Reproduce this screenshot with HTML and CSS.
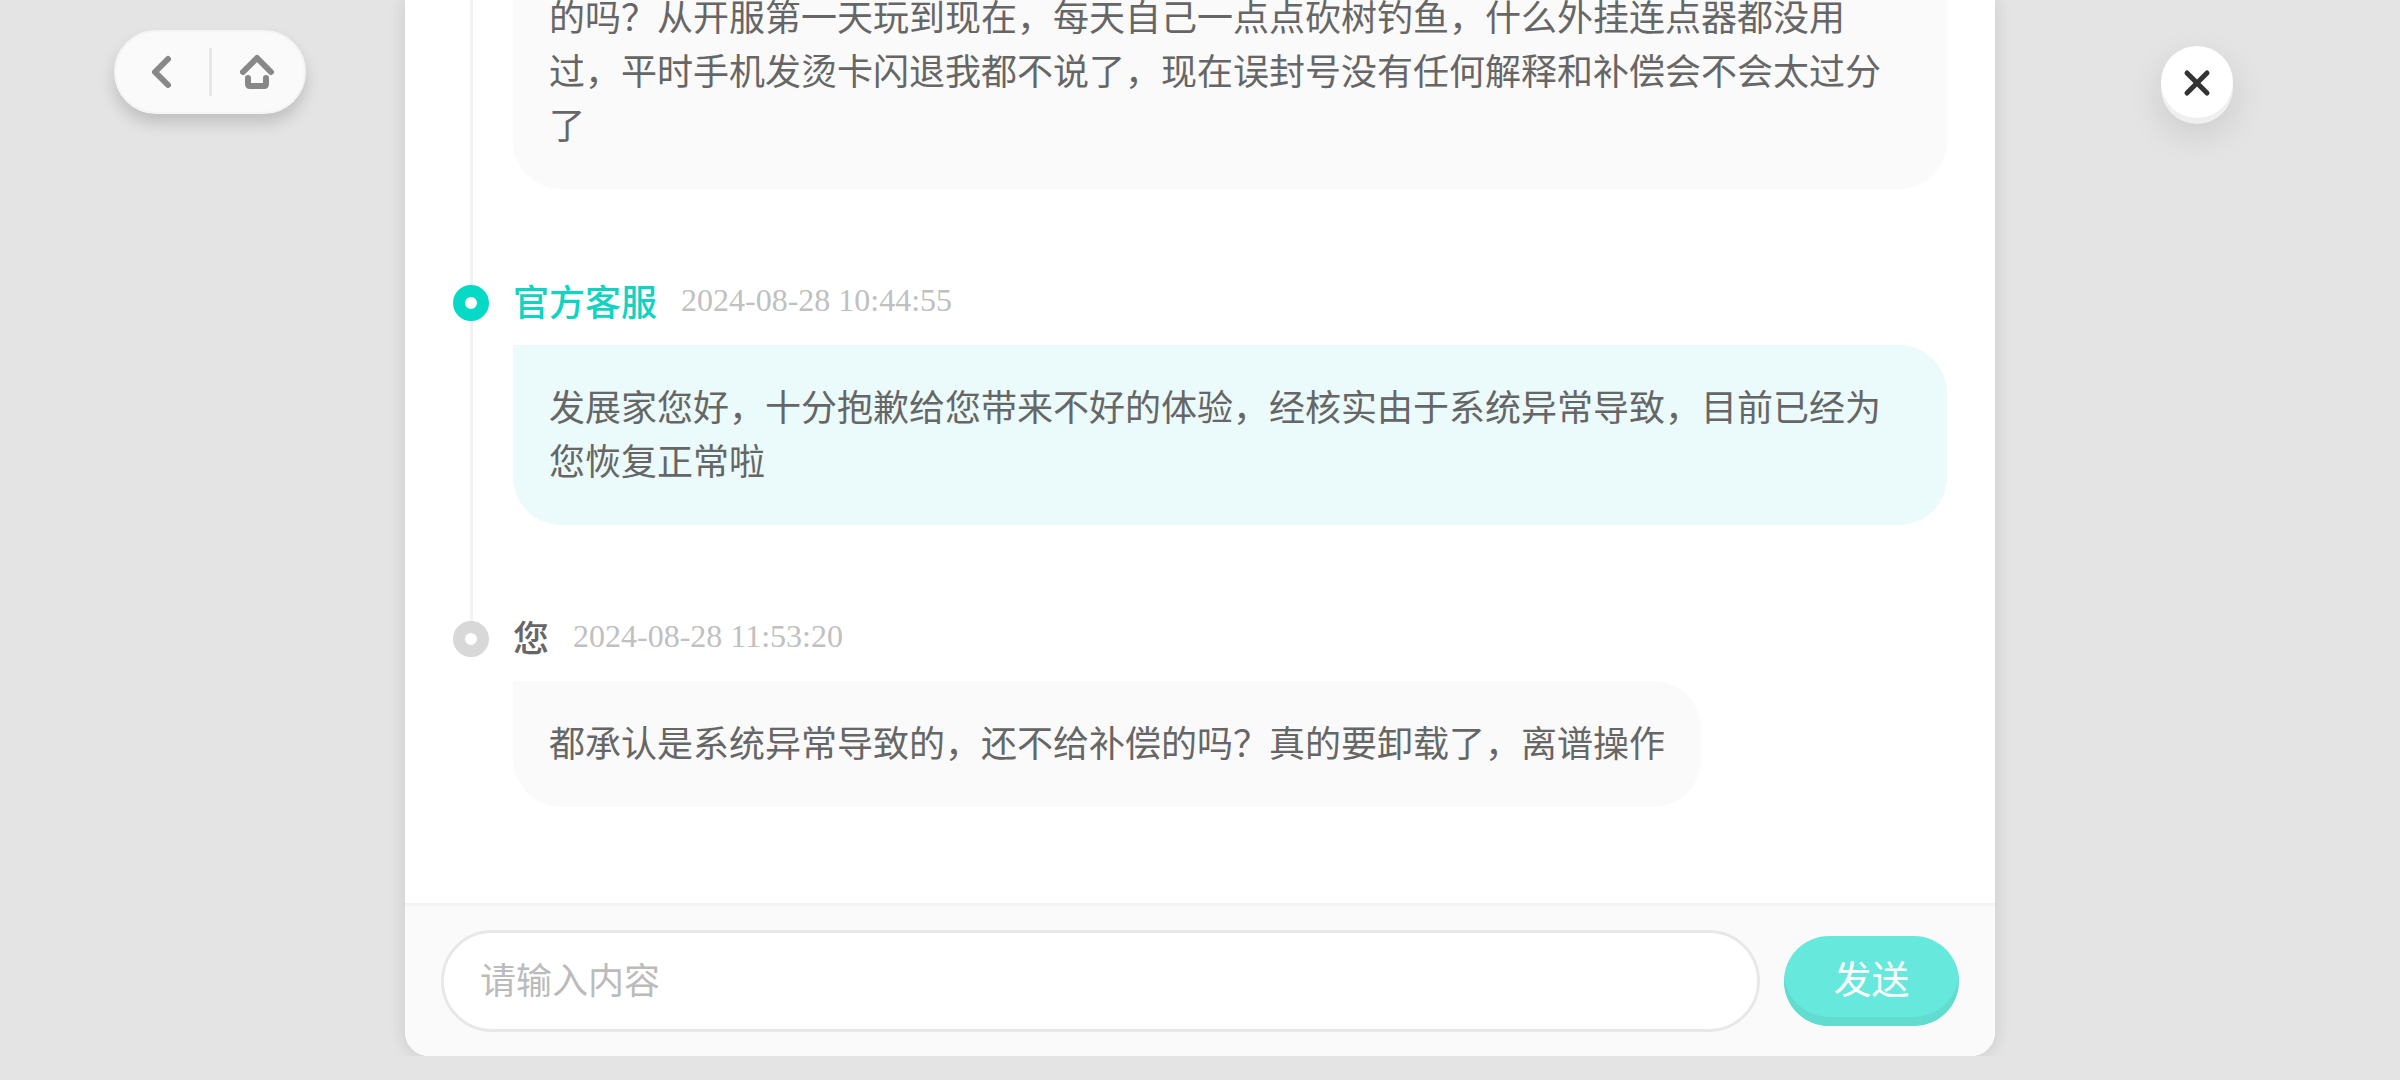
FILE: index.html
```html
<!DOCTYPE html>
<html lang="zh-CN">
<head>
  <meta charset="UTF-8">
  <meta name="viewport" content="width=device-width, initial-scale=1.0">
  <title>官方客服</title>
  <link rel="stylesheet" href="styles.css">
</head>
<body>

  <!-- Back / Home -->
  <div class="side side-left">
    <nav class="nav-pill">
      <button type="button" class="nav-btn" aria-label="返回">
        <svg width="36" height="36" viewBox="0 0 36 36"><path d="M24 5L11 18L24 31"/></svg>
      </button>
      <span class="nav-divider"></span>
      <button type="button" class="nav-btn" aria-label="首页">
        <svg width="36" height="36" viewBox="0 0 36 36"><path d="M3 18L17 4L31 18M8 24V30Q8 32 10 32H24Q26 32 26 30V24"/></svg>
      </button>
    </nav>
  </div>

  <!-- Chat Panel -->
  <main class="panel">
    <div class="messages">

      <div class="item">
        <div class="rail"><span class="line"></span></div>
        <div class="content">
          <p class="bubble">的吗？从开服第一天玩到现在，每天自己一点点砍树钓鱼，什么外挂连点器都没用过，平时手机发烫卡闪退我都不说了，现在误封号没有任何解释和补偿会不会太过分了</p>
        </div>
      </div>

      <div class="item official">
        <div class="rail"><span class="line-top"></span><span class="dot"></span><span class="line"></span></div>
        <div class="content">
          <div class="item-header">
            <span class="name">官方客服</span>
            <time class="date">2024-08-28 10:44:55</time>
          </div>
          <p class="bubble">发展家您好，十分抱歉给您带来不好的体验，经核实由于系统异常导致，目前已经为您恢复正常啦</p>
        </div>
      </div>

      <div class="item">
        <div class="rail"><span class="line-top"></span><span class="dot"></span></div>
        <div class="content">
          <div class="item-header">
            <span class="name">您</span>
            <time class="date">2024-08-28 11:53:20</time>
          </div>
          <p class="bubble">都承认是系统异常导致的，还不给补偿的吗？真的要卸载了，离谱操作</p>
        </div>
      </div>

    </div>

    <!-- Reply Form -->
    <form class="reply" onsubmit="return false">
      <input type="text" class="reply-input" placeholder="请输入内容" aria-label="请输入内容">
      <button type="submit" class="send-btn">发送</button>
    </form>
  </main>

  <!-- Close -->
  <div class="side side-right">
    <button type="button" class="close-btn" aria-label="关闭">
      <svg width="36" height="36" viewBox="0 0 36 36"><path d="M8 9L28 29M28 9L8 29"/></svg>
    </button>
  </div>

</body>
</html>
```

FILE: styles.css
```css
* {
  margin: 0;
  padding: 0;
  box-sizing: border-box;
}

body {
  display: grid;
  grid-template-columns: 1fr 66.25% 1fr;
  height: 100vh;
  padding-bottom: 24px;
  overflow: hidden;
  background-color: #e4e4e4;
  color: #666;
  font-family: "Noto Sans CJK SC", sans-serif;
  font-size: 36px;
  line-height: 54px;
}

button,
input {
  font-family: inherit;
  border: none;
}

button {
  cursor: pointer;
}

svg {
  display: block;
  fill: none;
  stroke-linecap: round;
  stroke-linejoin: round;
}

.side {
  display: flex;
  align-items: flex-start;
}

.side-left {
  padding: 30px 0 0 114px;
}

.side-right {
  justify-content: flex-end;
  padding: 46px 167px 0 0;
}

/* Back / Home */
.nav-pill {
  display: flex;
  align-items: center;
  width: 192px;
  height: 84px;
  background-color: #fafafa;
  border: 2px solid #f4f4f4;
  border-radius: 42px;
  box-shadow: 0 9px 15px rgba(0, 0, 0, 0.16);
}

.nav-btn {
  flex: 1;
  display: flex;
  justify-content: center;
  background: none;
}

.nav-btn svg {
  stroke: #888;
  stroke-width: 6;
}

.nav-divider {
  width: 3px;
  height: 48px;
  background-color: #e6e6e6;
}

/* Close */
.close-btn {
  display: flex;
  align-items: center;
  justify-content: center;
  width: 72px;
  height: 72px;
  background-color: #fff;
  border-radius: 50%;
  box-shadow: 0 6px 0 #efefef, 0 15px 36px rgba(0, 0, 0, 0.12);
}

.close-btn svg {
  stroke: #333;
  stroke-width: 5;
}

/* Chat Panel */
.panel {
  display: flex;
  flex-direction: column;
  min-height: 0;
  background-color: #fff;
  border-radius: 0 0 24px 24px;
  box-shadow: 0 0 18px rgba(0, 0, 0, 0.12);
  clip-path: inset(0 -36px 0 -36px);
}

.messages {
  flex: 1;
  min-height: 0;
  display: flex;
  flex-direction: column;
  justify-content: flex-end;
  padding: 0 48px 12px;
  overflow: hidden;
}

.item {
  display: flex;
  flex-shrink: 0;
  gap: 24px;
}

.content {
  flex: 1;
  padding-bottom: 84px;
}

.rail {
  display: flex;
  flex-direction: column;
  align-items: center;
  width: 36px;
}

.line-top,
.line {
  width: 3px;
  background-color: #f2f2f2;
}

.line-top {
  height: 12px;
}

.line {
  flex: 1;
}

.dot {
  width: 36px;
  height: 36px;
  border: 12px solid #d8d8d8;
  border-radius: 50%;
}

.item-header {
  display: flex;
  align-items: center;
  gap: 24px;
  height: 54px;
  margin-bottom: 18px;
}

.name {
  font-weight: 500;
}

.date {
  color: #c0c0c0;
  font-family: "Liberation Serif", serif;
  font-size: 32px;
}

.bubble {
  width: fit-content;
  padding: 33px 36px 39px;
  background-color: #fafafa;
  border-radius: 0 48px 48px 48px;
}

.official .dot {
  border-color: #06d9c6;
}

.official .name {
  color: #12d3c2;
}

.official .bubble {
  background-color: #ebfafa;
}

/* Reply Form */
.reply {
  display: flex;
  align-items: center;
  gap: 24px;
  padding: 24px 36px;
  background-color: #fafafa;
  border-top: 3px solid #f2f2f2;
  border-radius: 0 0 24px 24px;
}

.reply-input {
  flex: 1;
  min-width: 0;
  height: 102px;
  padding: 0 36px 6px;
  background-color: #fff;
  border: 3px solid #e8e8e8;
  border-radius: 51px;
  color: #666;
  font-size: 36px;
  outline: none;
}

.reply-input::placeholder {
  color: #bbb;
}

.send-btn {
  width: 175px;
  height: 90px;
  padding-bottom: 9px;
  background-color: #66e8dc;
  border-radius: 45px;
  box-shadow: inset 0 -9px 0 #62dccf;
  color: #fff;
  font-size: 38px;
}
```
